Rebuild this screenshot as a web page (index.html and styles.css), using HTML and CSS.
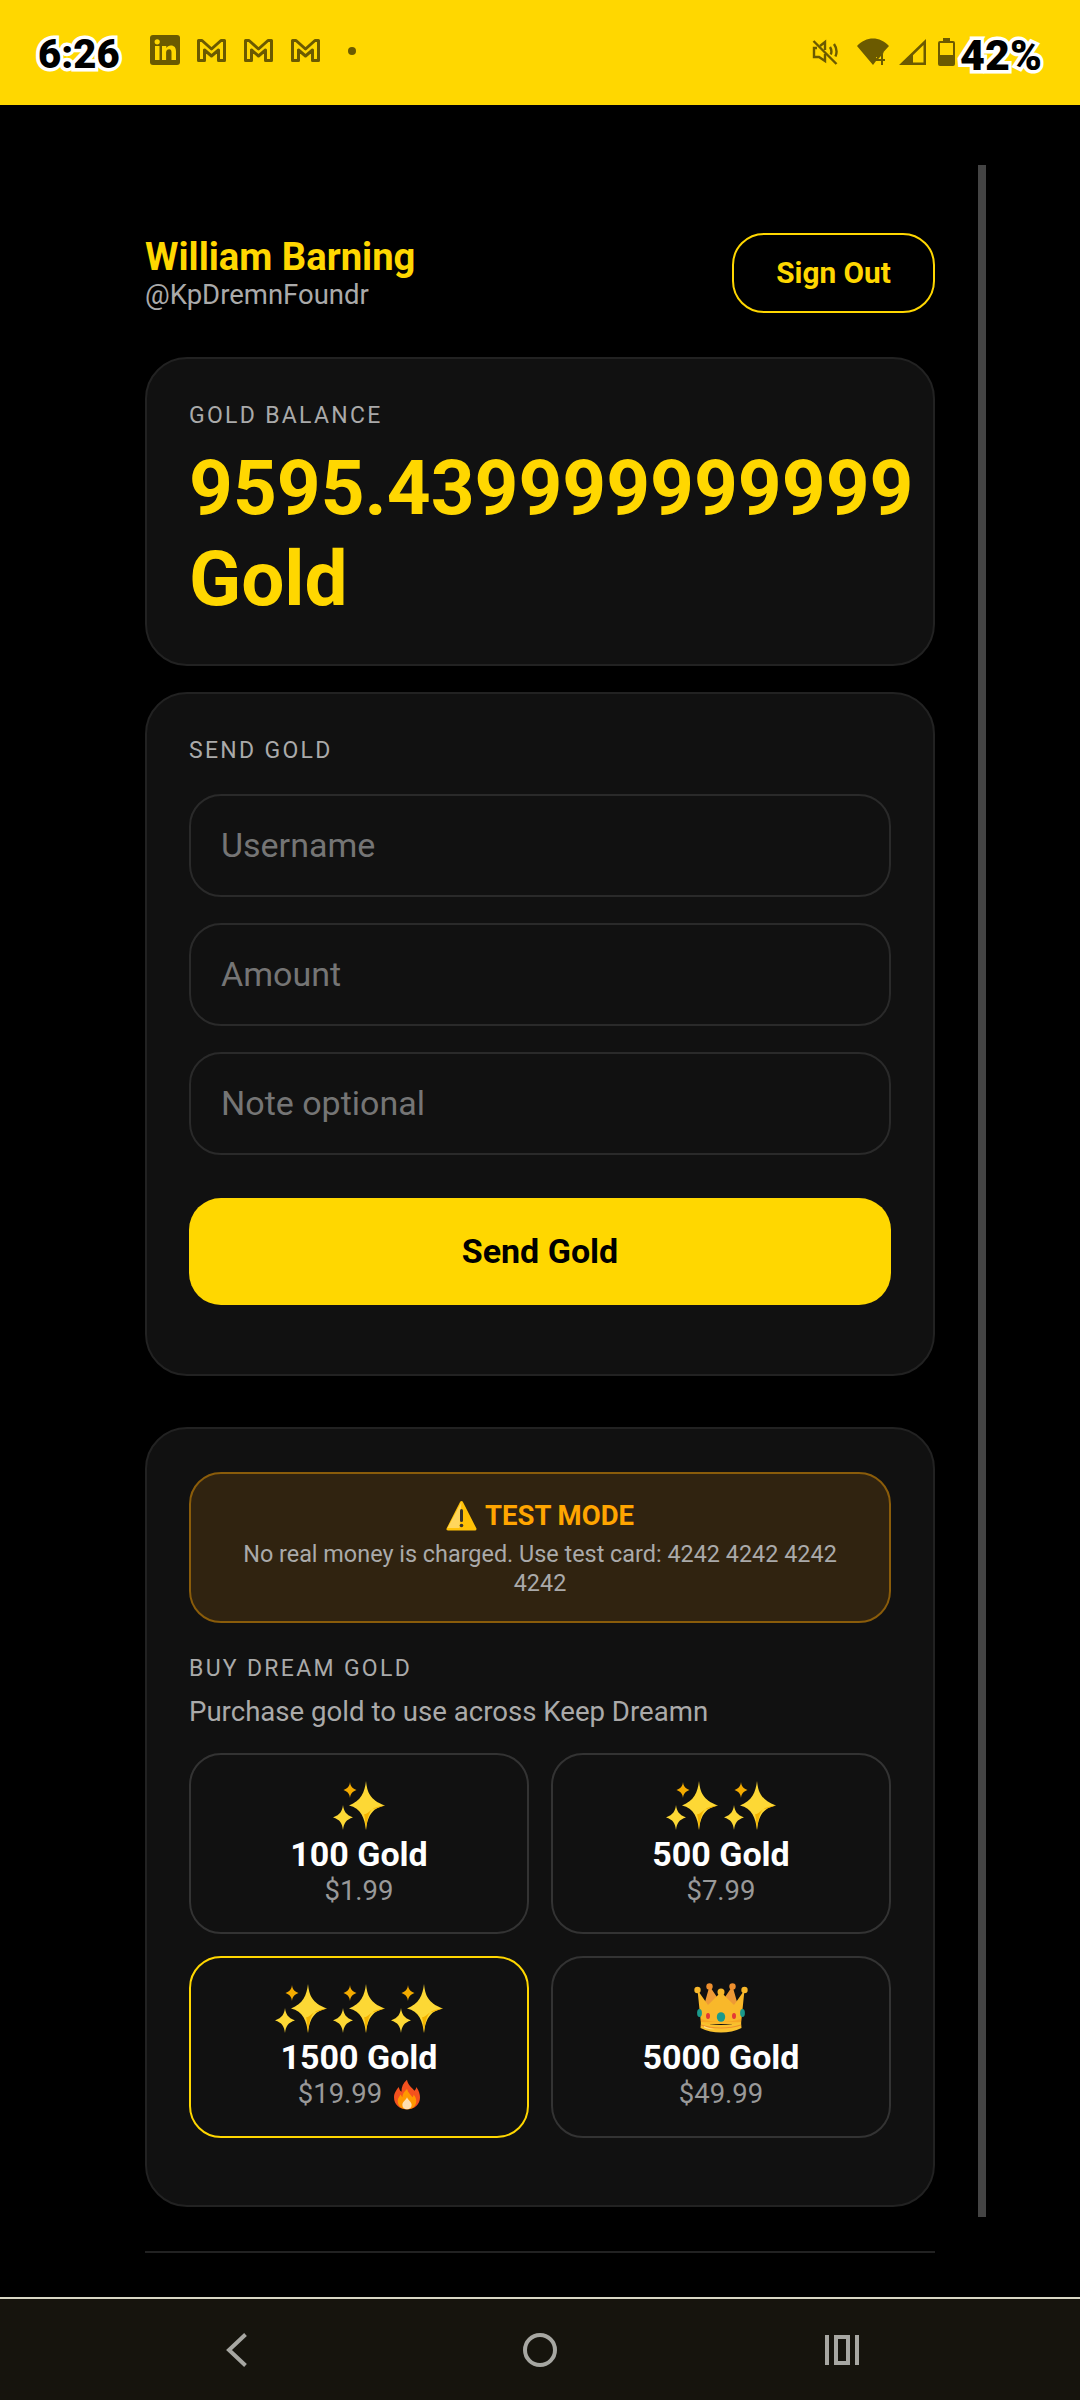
FILE: index.html
```html
<!DOCTYPE html>
<html lang="en">
<head>
<meta charset="utf-8">
<title>Keep Dreamn Gold</title>
<link rel="stylesheet" href="styles.css">
</head>
<body>
<svg class="defs" width="0" height="0" aria-hidden="true">
  <defs>
    <symbol id="sparkles" viewBox="0 0 52 49">
      <path fill="#fdd835" d="M33 0c1.200 11 3.800 19 19 24.500C38 27 34.300 37 33 49c-1.300-12-5-22-17-24.500C28 20 31.800 11 33 0z"/>
      <path fill="#f4b400" d="M33 49c-.5-6-1-12-2-16 2 1 4-2 8-4.500-3.500 4-4.700 9.500-6 20.500zM52 24.500c-4 1.300-8 2.500-13 4 2.500-2 7-3.500 13-4z"/>
      <path fill="#fdd835" d="M10 24c.8 6 2.600 9.500 10 12.500-7 2-9.200 6-10 12.500-.8-6.500-3-10.500-10-12.500 7.400-3 9.200-6.500 10-12.500z"/>
      <path fill="#f4ab00" d="M17 1c.5 4 1.800 6 6.500 8-4.700 2-6 4-6.500 8-.5-4-1.800-6-6.500-8 4.700-2 6-4 6.500-8z"/>
    </symbol>
  </defs>
</svg>
<div class="phone">
  <header class="status">
    <div class="status-left">
      <span class="clock">6:26</span>
      <svg class="ic-li" viewBox="0 0 30 30"><rect width="30" height="30" rx="3" fill="#6b5a00"/><g fill="#ffd700"><rect x="5" y="11" width="4.500" height="14"/><circle cx="7.200" cy="6.800" r="2.600"/><path d="M12 11h4.300v2c1-1.500 2.500-2.400 4.500-2.400 3.700 0 5.200 2.300 5.200 6V25h-4.500v-7.500c0-2-.7-3.200-2.300-3.200-1.800 0-3.100 1.200-3.100 3.300V25H12z"/></g></svg>
      <svg class="ic-m" viewBox="0 0 29 23"><path fill="none" stroke="#6b5a00" stroke-width="3" stroke-linejoin="round" d="M1.500 21.500V1.500H5l9.500 8.500L24 1.500h3.500v20h-6V11l-7 6-7-6v10.500z"/></svg>
      <svg class="ic-m" viewBox="0 0 29 23"><path fill="none" stroke="#6b5a00" stroke-width="3" stroke-linejoin="round" d="M1.500 21.500V1.500H5l9.500 8.500L24 1.500h3.500v20h-6V11l-7 6-7-6v10.500z"/></svg>
      <svg class="ic-m" viewBox="0 0 29 23"><path fill="none" stroke="#6b5a00" stroke-width="3" stroke-linejoin="round" d="M1.500 21.500V1.500H5l9.500 8.500L24 1.500h3.500v20h-6V11l-7 6-7-6v10.500z"/></svg>
      <span class="dot"></span>
    </div>
    <div class="status-right">
      <svg class="ic-mute" viewBox="0 0 26 26"><g fill="none" stroke="#6b5a00" stroke-width="2.400"><path d="M1.500 2l23 23"/><path d="M5 9H2v9h5l6 4v-7"/><path d="M8 7l5-4v8"/><path d="M18 8c1.600 2.500 1.800 5 .8 7.500M22 5c2.800 4 3 9 1.400 12.500"/></g></svg>
      <svg class="ic-wifi" viewBox="0 0 32 27"><path fill="#6b5a00" d="M0 8C9-2 23-2 32 8L22 19h-3v4l-3 4z"/><path fill="none" stroke="#6b5a00" stroke-width="2" d="M26 14l-7 8h9M25 16v11"/></svg>
      <svg class="ic-signal" viewBox="0 0 27 26"><path fill="#6b5a00" d="M27 0v26H0zM24.500 6L6.500 23.500h18z" fill-rule="evenodd"/><path fill="#6b5a00" d="M13 15h1v9H3z"/></svg>
      <svg class="ic-batt" viewBox="0 0 17 28"><path fill="#6b5a00" d="M5 0h7v3h3a2 2 0 0 1 2 2v21a2 2 0 0 1-2 2H2a2 2 0 0 1-2-2V5a2 2 0 0 1 2-2h3z"/><rect x="2" y="5" width="13" height="12" fill="#ffd700"/></svg>
      <span class="pct">42%</span>
    </div>
  </header>

  <main class="screen">
    <div class="scrollbar"></div>
    <div class="column">
      <section class="profile">
        <div>
          <div class="name">William Barning</div>
          <div class="handle">@KpDremnFoundr</div>
        </div>
        <button class="signout">Sign Out</button>
      </section>

      <section class="card balance">
        <div class="label">GOLD BALANCE</div>
        <div class="amount">9595.439999999999 Gold</div>
      </section>

      <section class="card send">
        <div class="label">SEND GOLD</div>
        <div class="field">Username</div>
        <div class="field">Amount</div>
        <div class="field">Note optional</div>
        <button class="send-btn">Send Gold</button>
      </section>

      <section class="card buy">
        <div class="notice">
          <div class="notice-title">
            <svg class="ic-warn" viewBox="0 0 31 31"><path fill="#ffc107" stroke="#ffc107" stroke-width="3" stroke-linejoin="round" d="M15.500 2.500L2 29h27z"/><path fill="#ffd65c" d="M15.500 2L1.500 28l12 0z"/><rect x="14" y="9" width="3" height="13" rx="1.500" fill="#37322a"/><circle cx="15.500" cy="25.500" r="1.800" fill="#37322a"/></svg>
            <span>TEST MODE</span>
          </div>
          <div class="notice-text">No real money is charged. Use test card: 4242 4242 4242 4242</div>
        </div>
        <div class="label buy-label">BUY DREAM GOLD</div>
        <div class="sub">Purchase gold to use across Keep Dreamn</div>
        <div class="packs">
          <div class="pack">
            <div class="glyphs"><svg class="spark"><use href="#sparkles"/></svg></div>
            <div class="qty">100 Gold</div>
            <div class="price">$1.99</div>
          </div>
          <div class="pack">
            <div class="glyphs"><svg class="spark"><use href="#sparkles"/></svg><svg class="spark"><use href="#sparkles"/></svg></div>
            <div class="qty">500 Gold</div>
            <div class="price">$7.99</div>
          </div>
          <div class="pack hot">
            <div class="glyphs"><svg class="spark"><use href="#sparkles"/></svg><svg class="spark"><use href="#sparkles"/></svg><svg class="spark"><use href="#sparkles"/></svg></div>
            <div class="qty">1500 Gold</div>
            <div class="price">$19.99 <svg class="ic-fire" viewBox="0 0 28 32"><path fill="#f4511e" d="M14 0c1 6 5 8 8 12 1.500-1 2-3 2-4 3 4 4 8 4 11 0 8-6 13-14 13S0 27 0 19c0-5 3-8 5-11 1 2 1 4 3 5 0-5 2-10 6-13z"/><path fill="#ff9800" d="M14 10c1 4 4 6 6 9 1-1 1-2 1-3 2 2 3 5 3 7 0 5-4 9-10 9S4 28 4 23c0-3 2-5 3-7 1 1 1 2 2 3 0-4 2-6 5-9z"/><path fill="#ffe0b2" d="M14 19c1 3 5 5 5 8 0 3-2 5-5 5s-5-2-5-5c0-3 4-5 5-8z"/></svg></div>
          </div>
          <div class="pack">
            <div class="glyphs">
              <svg class="ic-crown" viewBox="0 0 54 50">
                <path fill="#ee9a36" d="M15.500 3L9 26h36L38.500 3 27 20z"/>
                <path fill="#f9b82a" d="M3.500 7L14 22 27 9l13 13L50.500 7 47 41H7z"/>
                <path fill="#f6a623" d="M7 36c12 4 28 4 40 0v3H7z"/>
                <path fill="#f9c12e" d="M7 39c12 4 28 4 40 0l.500 6c-12 6-29 6-41 0z"/>
                <path fill="none" stroke="#ef8f2c" stroke-width="1.200" d="M7 42c12 4 28 4 40 0"/>
                <path fill="#ffe08a" d="M10 43c4 2 8 2.800 11 3.200-4 .3-8-.5-11-1.800z"/>
                <circle cx="3.500" cy="7" r="3.200" fill="#f9b82a"/><circle cx="50.500" cy="7" r="3.200" fill="#f9b82a"/>
                <circle cx="15.500" cy="3.500" r="3.200" fill="#ee8f2e"/><circle cx="38.500" cy="3.500" r="3.200" fill="#ee8f2e"/><circle cx="27" cy="9" r="3.500" fill="#f9b82a"/>
                <ellipse cx="27" cy="34" rx="4.200" ry="4.800" fill="#1a9a8c"/><ellipse cx="5.500" cy="30" rx="2.400" ry="4" fill="#1a9a8c"/><ellipse cx="48.500" cy="30" rx="2.400" ry="4" fill="#1a9a8c"/>
                <ellipse cx="14" cy="33" rx="2" ry="3" fill="#e53935"/><ellipse cx="40" cy="33" rx="2" ry="3" fill="#e53935"/>
              </svg>
            </div>
            <div class="qty">5000 Gold</div>
            <div class="price">$49.99</div>
          </div>
        </div>
      </section>

      <div class="rule"></div>
    </div>
  </main>

  <nav class="navbar">
    <svg class="ic-back" viewBox="0 0 21 34"><path fill="none" stroke="#a7a7a2" stroke-width="4" d="M19.500 1.500L3 17l16.500 15.500"/></svg>
    <svg class="ic-home" viewBox="0 0 34 34"><circle cx="17" cy="17" r="15" fill="none" stroke="#a7a7a2" stroke-width="4"/></svg>
    <svg class="ic-recent" viewBox="0 0 34 30"><g fill="#a7a7a2"><rect width="4" height="30"/><rect x="30" width="4" height="30"/><path d="M9 0h16v30H9zM13 4v22h8V4z" fill-rule="evenodd"/></g></svg>
  </nav>
</div>
</body>
</html>
```

FILE: styles.css
```css
* { box-sizing: border-box; }
html, body { margin: 0; padding: 0; background: #000; }
body { font-family: Roboto, "Liberation Sans", sans-serif; color: #fff; }
.defs { position: absolute; }
.phone { width: 1080px; height: 2400px; display: flex; flex-direction: column; overflow: hidden; }

.status { height: 105px; flex: none; background: #ffd700; display: flex; justify-content: space-between; align-items: center; padding: 0 38px 1px 38px; }
.status-left, .status-right { display: flex; align-items: center; }
.clock, .pct { font-weight: 900; font-size: 40px; line-height: 44px; color: #000; -webkit-text-stroke: 7px #fff; paint-order: stroke fill; margin-top: 5px; }
.clock { width: 80px; text-align: center; }
.ic-li { width: 30px; height: 30px; margin: -4px 0 0 32px; }
.ic-m { width: 29px; height: 23px; margin: -4px 0 0 18px; }
.ic-li + .ic-m { margin-left: 17px; }
.dot { width: 8px; height: 8px; border-radius: 50%; background: #6b5a00; margin: -2px 0 0 28px; }
.ic-mute { width: 26px; height: 26px; margin-top: -1px; }
.ic-wifi { width: 32px; height: 27px; margin: -1px 0 0 19px; }
.ic-signal { width: 27px; height: 26px; margin: -1px 0 0 10px; }
.ic-batt { width: 17px; height: 28px; margin: -1px 0 0 12px; }
.pct { font-size: 43px; margin-left: 5px; width: 82px; text-align: center; white-space: nowrap; }

.screen { flex: 1; position: relative; padding: 0 0 0 145px; overflow: hidden; }
.column { width: 790px; display: flex; flex-direction: column; }
.scrollbar { position: absolute; left: 978px; top: 60px; width: 8px; height: 2052px; background: #444; }

.profile { display: flex; justify-content: space-between; align-items: center; margin-top: 128px; height: 80px; }
.name { font-size: 38.200px; line-height: 44px; font-weight: 700; color: #ffd700; }
.handle { font-size: 27.500px; line-height: 32px; color: #aaa; }
.signout { width: 203px; height: 80px; padding: 0 0 2px; border: 2px solid #ffd700; border-radius: 32px; background: #000; color: #ffd700; font: 700 29.800px Roboto, sans-serif; }

.card { background: #111; border: 2px solid #222; border-radius: 42px; padding: 43px 42px; }
.label { font-size: 23px; line-height: 26px; letter-spacing: 2.300px; color: #aaa; }
.balance { margin-top: 44px; height: 309px; padding-top: 44px; }
.amount { font-size: 76.500px; line-height: 91px; font-weight: 700; color: #ffd700; margin-top: 14px; margin-right: -20px; }
.send { margin-top: 26px; height: 684px; padding-top: 44px; }
.field { height: 103px; border: 2px solid #2a2a2a; border-radius: 32px; background: #111; color: #757575; font-size: 34px; padding: 0 30px 2px; display: flex; align-items: center; margin-top: 26px; }
.label + .field { margin-top: 30px; }
.send-btn { display: block; width: 100%; height: 107px; margin-top: 43px; padding: 0 0 2px; border: 0; border-radius: 32px; background: #ffd700; color: #000; font: 700 34px Roboto, sans-serif; }

.buy { margin-top: 51px; height: 780px; }
.notice { height: 151px; border: 2px solid #8a5c0a; border-radius: 32px; background: #302310; text-align: center; padding: 25px 26px 0; }
.notice-title { display: flex; justify-content: center; align-items: center; gap: 8px; color: #ffa500; font-size: 27.500px; line-height: 34px; font-weight: 700; }
.ic-warn { width: 31px; height: 31px; margin-top: -2px; }
.notice-text { font-size: 23.400px; line-height: 28.500px; color: #aaa; margin-top: 7px; }
.buy-label { margin-top: 33px; }
.sub { font-size: 27.600px; line-height: 34px; color: #aaa; margin-top: 13px; }
.packs { display: grid; grid-template-columns: 1fr 1fr; grid-template-rows: 181px 182px; gap: 22px; margin-top: 24px; }
.pack { border: 2px solid #333; border-radius: 32px; background: #111; display: flex; flex-direction: column; align-items: center; padding-top: 25px; }
.hot { border-color: #ffd700; }
.glyphs { display: flex; justify-content: center; gap: 6px; height: 50px; align-items: center; }
.spark { width: 52px; height: 49px; }
.ic-crown { width: 54px; height: 50px; }
.qty { font-size: 34px; line-height: 38px; font-weight: 700; color: #fff; margin-top: 5px; }
.price { font-size: 27.500px; line-height: 32px; color: #999; margin-top: 2px; display: flex; align-items: center; gap: 12px; }
.ic-fire { width: 26px; height: 31px; }

.rule { height: 2px; background: #222; margin-top: 44px; }

.navbar { height: 103px; flex: none; background: #16140d; border-top: 2px solid #d8d6c4; display: flex; align-items: center; padding-left: 226px; }
.ic-back { width: 21px; height: 34px; }
.ic-home { width: 34px; height: 34px; margin-left: 276px; }
.ic-recent { width: 34px; height: 30px; margin-left: 268px; }
```
